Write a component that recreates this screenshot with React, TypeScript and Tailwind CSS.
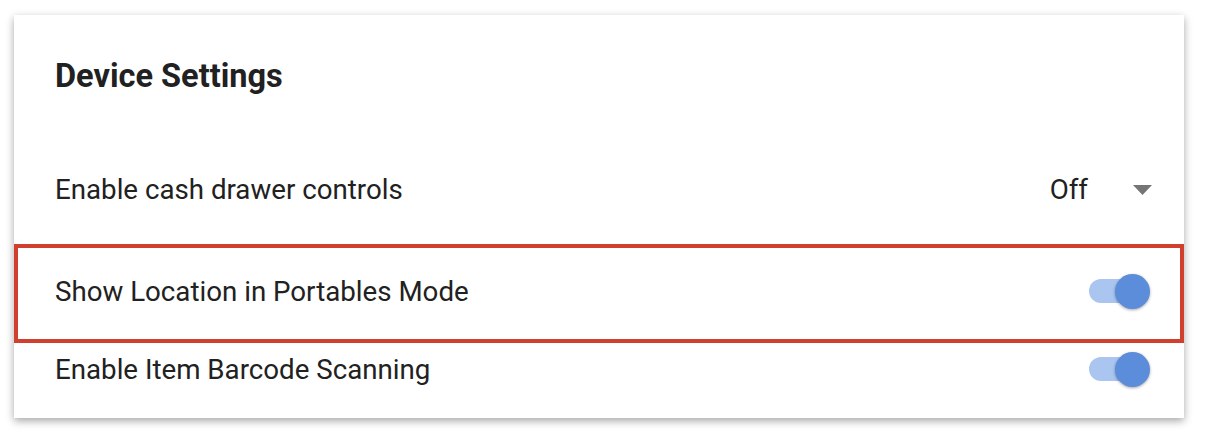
import React from 'react';

function Toggle() {
  return (
    <div className="relative h-[35px] w-[61px]">
      <div className="absolute left-0 top-[5px] h-[24px] w-[50px] rounded-full bg-[#a9c5f0]" />
      <div className="absolute right-0 top-0 h-[35px] w-[35px] rounded-full bg-[#5b8ddb] shadow-[0_1px_3px_rgba(0,0,0,0.35)]" />
    </div>
  );
}

export default function App() {
  const font = { fontFamily: 'Roboto, "Liberation Sans", sans-serif' };
  return (
    <div className="h-[440px] w-[1206px] bg-white pl-[14px] pt-[15px]" style={font}>
      <div className="w-[1170px] bg-white pb-[22px] shadow-[0_3px_8px_rgba(0,0,0,0.35)]">
        {/* Header */}
        <div className="h-[124px] pl-[41px] pt-[41px]">
          <h1 className="text-[32.5px] font-bold leading-[40px] text-[#212121]">Device Settings</h1>
        </div>

        {/* Cash drawer */}
        <div className="flex h-[105px] items-center justify-between pb-[4px] pl-[41px] pr-[32px]">
          <span className="text-[27.7px] leading-[32px] text-[#212121]">Enable cash drawer controls</span>
          <div className="flex items-center gap-[45px]">
            <span className="text-[27.7px] leading-[32px] text-[#212121]">Off</span>
            <svg width="19" height="10" viewBox="0 0 19 10">
              <path d="M0 0 L19 0 L9.5 10 Z" fill="#757575" />
            </svg>
          </div>
        </div>

        {/* Portables mode (highlighted) */}
        <div className="flex h-[99px] items-center justify-between border-4 border-[#d1402e] pb-[4px] pl-[37px] pr-[30px]">
          <span className="text-[27.7px] leading-[32px] text-[#212121]">Show Location in Portables Mode</span>
          <Toggle />
        </div>

        {/* Barcode scanning */}
        <div className="flex h-[53px] items-center justify-between pl-[41px] pr-[34px]">
          <span className="text-[27.7px] leading-[32px] text-[#212121]">Enable Item Barcode Scanning</span>
          <Toggle />
        </div>
      </div>
    </div>
  );
}
